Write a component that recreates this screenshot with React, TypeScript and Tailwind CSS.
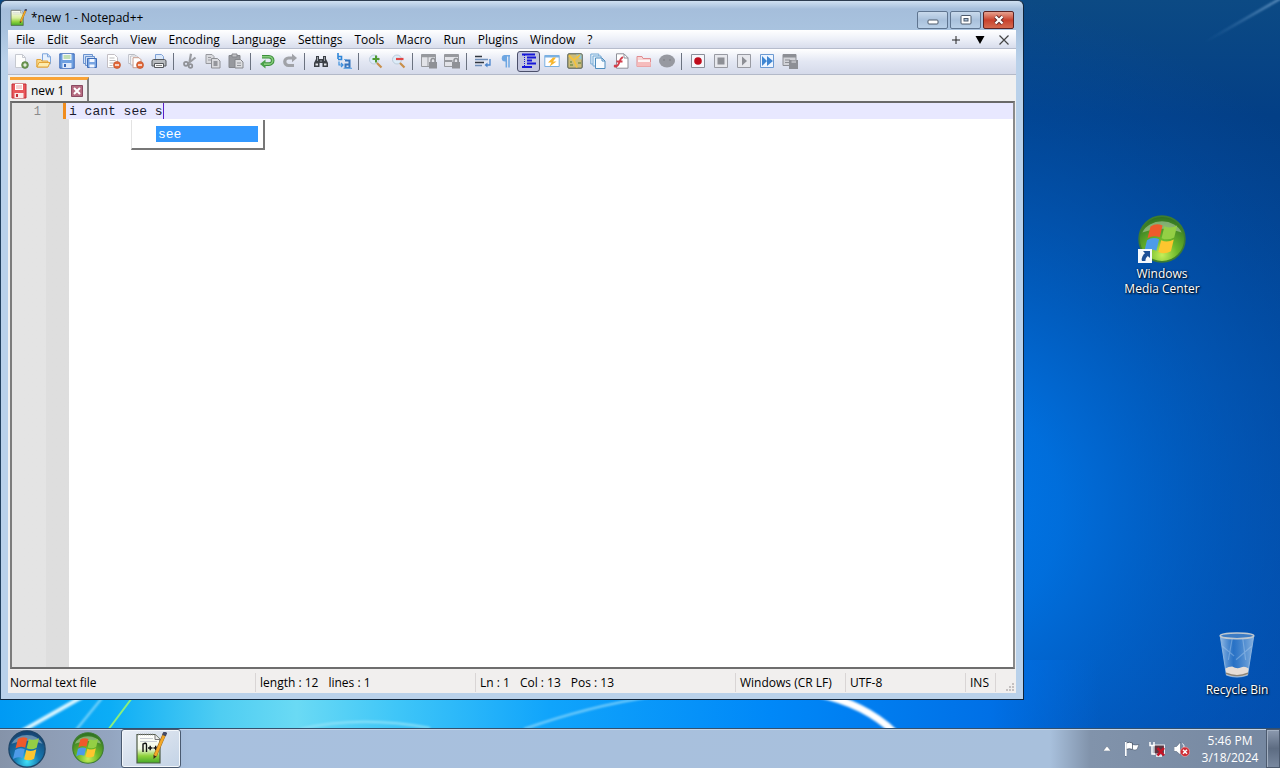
import { useState } from "react";
import type { ReactNode } from "react";

function Icon({ children, size = "size-4" }: { children: ReactNode; size?: string }) {
  return (
    <svg viewBox="0 0 16 16" className={`${size} shrink-0`} fill="none" aria-hidden="true">
      {children}
    </svg>
  );
}

const page = "M2.5 1.5h7l3 3v10h-10z";

const IconNew = (
  <Icon>
    <path d={page} fill="#fdfdfd" stroke="#c6c9d0" />
    <path d="M9.5 1.5v3h3" stroke="#c6c9d0" />
    <circle cx="12" cy="12" r="3.4" fill="#6f9a55" stroke="#4d7538" strokeWidth=".6" />
    <path d="M12 10.2v3.6M10.2 12h3.6" stroke="#fff" strokeWidth="1.2" />
  </Icon>
);
const IconOpen = (
  <Icon>
    <path d="M6.5.8h5l3 3v7h-8z" fill="#e8f1fc" stroke="#7ea6dc" />
    <path d="M11.5.8v3h3" stroke="#7ea6dc" />
    <path d="M.8 14V6.5h4l1 1.5h6V14z" fill="#fbd98a" stroke="#e2a338" />
    <path d="M1 14l2-4.5h11L12 14z" fill="#fdecae" stroke="#e2a338" />
  </Icon>
);
const IconSave = (
  <Icon>
    <path d="M.8.8h14.4v14.4H.8z" fill="#6fa0e0" stroke="#3968b8" />
    <path d="M3.5 1h9v6h-9z" fill="#f4f8ff" />
    <path d="M4.5 3h7M4.5 5h7" stroke="#8fc56f" />
    <path d="M3.5 10h9v5h-9z" fill="#dfeafa" />
    <path d="M5 11h2v3H5z" fill="#3968b8" />
  </Icon>
);
const IconSaveAll = (
  <Icon>
    <path d="M1.5 1.5h9v9h-9z" fill="#cfe0f7" stroke="#6b93cf" />
    <path d="M3.5 3.5h9v9h-9z" fill="#cfe0f7" stroke="#6b93cf" />
    <path d="M5.5 5.5h9v9h-9z" fill="#79a5e2" stroke="#3f6db8" />
    <path d="M7.5 6h5v3h-5zM7.5 11.5h5v3h-5z" fill="#f2f7ff" />
  </Icon>
);
const Minus = (
  <g>
    <circle cx="12" cy="12" r="3.5" fill="#e2683a" stroke="#b94b22" strokeWidth=".6" />
    <path d="M10 12h4" stroke="#fff" strokeWidth="1.4" />
  </g>
);
const IconClose = (
  <Icon>
    <path d={page} fill="#fff" stroke="#c3bfc4" />
    <path d="M4.5 5h5M4.5 7.5h6M4.5 10h5M4.5 12.5h3" stroke="#bbb" />
    {Minus}
  </Icon>
);
const IconCloseAll = (
  <Icon>
    <path d="M.7 1.5h6l2 2v7h-8z" fill="#fff" stroke="#b9bcc4" />
    <path d="M2.7 3h6l2 2v7h-8z" fill="#fff" stroke="#b9bcc4" />
    <path d="M5 4.7h6l2 2v8H5z" fill="#fff" stroke="#c59a8c" />
    {Minus}
  </Icon>
);
const IconPrint = (
  <Icon>
    <path d="M4.5 7V1.5h6l2 2V7" fill="#dce9fa" stroke="#7ea1d6" />
    <path d="M1 7.5l1.5-1h11l1.5 1V13H1z" fill="#b9bcc0" stroke="#55585c" />
    <path d="M3.5 10.5h9v4h-9z" fill="#f8f8f8" stroke="#55585c" />
    <path d="M5 12.5h6" stroke="#888" />
  </Icon>
);
const IconCut = (
  <Icon>
    <path d="M9 .8L7.5 9M13.5 4.5L6 10.5" stroke="#9a9ca1" strokeWidth="2.2" />
    <circle cx="4" cy="10.8" r="2" stroke="#8f9196" strokeWidth="1.7" />
    <circle cx="8.5" cy="13" r="1.8" stroke="#8f9196" strokeWidth="1.7" />
  </Icon>
);
const IconCopy = (
  <Icon>
    <path d="M1 1.5h6l2 2v7H1z" fill="#d9dade" stroke="#97999e" />
    <path d="M3 4.5h3M3 7h3" stroke="#97999e" />
    <path d="M6.5 5.5h6L15 8v7H6.5z" fill="#d9dade" stroke="#8c8e93" />
    <path d="M8.5 8h4v5h-4z" fill="#94969b" />
  </Icon>
);
const IconPaste = (
  <Icon>
    <path d="M1 2.500h11v12H1z" fill="#97999e" stroke="#85878c" />
    <path d="M4 1h5v3H4z" fill="#c4c5c9" stroke="#85878c" />
    <path d="M7 6.500h5.500L15 9v6H7z" fill="#dcdde0" stroke="#85878c" />
    <path d="M9 10h4M9 12.500h4" stroke="#94969b" />
  </Icon>
);
const IconUndo = (
  <Icon>
    <path d="M3 3.700h7a3.700 3.700 0 0 1 0 7.400H5.500" stroke="#3d8f3d" strokeWidth="3.600" />
    <path d="M6.500 6.500v9L1 11z" fill="#49a049" />
    <path d="M3 3.700h7a3.700 3.700 0 0 1 0 7.400H5" stroke="#86cc7c" strokeWidth="1.600" />
  </Icon>
);
const IconRedo = (
  <Icon>
    <path d="M11 5H6.500a3.500 3.500 0 0 0 0 7.500H12" stroke="#a0a2a7" strokeWidth="3.200" />
    <path d="M10 .8v8.500L15 5z" fill="#a0a2a7" />
  </Icon>
);
const IconFind = (
  <Icon>
    <path d="M3 3h3v3h4V3h3v3l2 4v4H9.500v-4h-3v4H1v-4l2-4z" fill="#3b3f45" />
    <path d="M2.500 10.500h2.500v2H2.500zM11 10.500h2.500v2H11z" fill="#e2e4e8" />
    <path d="M4.500 4v4M11.500 4v4M8 7v2" stroke="#9aa0a8" />
  </Icon>
);
const IconReplace = (
  <Icon>
    <path d="M2 0v6M2 3.500h3.500v3H2" stroke="#2f86d8" strokeWidth="1.600" />
    <path d="M3 8.500v3.500h3.500M5 10l2 2-2 2" stroke="#3d8fdd" strokeWidth="1.200" />
    <path d="M9 7.500h4.500V15H9.500v-3.500h4" stroke="#3574bd" strokeWidth="2" />
    <path d="M7.500 15.300H16M8 6.500h3" stroke="#6aa9e4" strokeWidth="1.200" />
  </Icon>
);
const IconZoomIn = (
  <Icon>
    <circle cx="7" cy="6.500" r="4.500" fill="#dcecf8" stroke="#bccbda" />
    <path d="M10 10l4.500 4.500" stroke="#c98f4b" strokeWidth="2.200" />
    <path d="M9 2.500v7M5.500 6h7" stroke="#4f9a31" strokeWidth="2" />
  </Icon>
);
const IconZoomOut = (
  <Icon>
    <circle cx="7" cy="6.500" r="4.500" fill="#dcecf8" stroke="#bccbda" />
    <path d="M10 10l4.500 4.500" stroke="#c98f4b" strokeWidth="2.200" />
    <path d="M6 6h7.500" stroke="#e04646" strokeWidth="2.200" />
  </Icon>
);
const Lock = (
  <g>
    <path d="M8 9h8v6.500H8z" fill="#8f9196" />
    <path d="M10 9V7.500a2 2 0 0 1 4 0V9" stroke="#8f9196" strokeWidth="1.500" />
  </g>
);
const IconSyncV = (
  <Icon>
    <path d="M.5 1.500h14v12H.5z" fill="#e2e3e8" stroke="#97999e" />
    <path d="M.5 3h14" stroke="#97999e" strokeWidth="2.500" />
    <path d="M7 3v10" stroke="#97999e" />
    {Lock}
  </Icon>
);
const IconSyncH = (
  <Icon>
    <path d="M.5 1.500h14v12H.5z" fill="#e2e3e8" stroke="#97999e" />
    <path d="M.5 3h14M.5 8h8" stroke="#97999e" strokeWidth="2.200" />
    {Lock}
  </Icon>
);
const IconWrap = (
  <Icon>
    <path d="M0 3.500h7M0 9.500h9" stroke="#30363f" strokeWidth="1.300" />
    <path d="M0 6.500h13M0 12.500h7" stroke="#6f8fba" strokeWidth="1.300" />
    <path d="M15 6v6h-4" stroke="#4a84cc" strokeWidth="1.300" />
    <path d="M12.500 9.500L9.500 12l3 2.500z" fill="#4a84cc" />
  </Icon>
);
const IconPilcrow = (
  <Icon>
    <path d="M12 2.800H6.500M8.300 3v11.500M11 3v11.500" stroke="#6da6e2" strokeWidth="1.500" />
    <path d="M8 2H7a3 3 0 0 0 0 6.500h1z" fill="#6da6e2" />
  </Icon>
);
const IconIndent = (
  <Icon>
    <path d="M1 1.500h13M6 4.500h9M6 7.500h5M6 10.500h9M1 14h10" stroke="#1616d8" strokeWidth="1.800" />
    <path d="M3.500 2v12" stroke="#1616d8" strokeDasharray="1 1" />
  </Icon>
);
const IconLanguage = (
  <Icon>
    <path d="M.8 2.500h14.400v11H.8z" fill="#fff" stroke="#7ab0e2" />
    <path d="M.8 3.500h14.400" stroke="#7ab0e2" strokeWidth="2" />
    <path d="M9 4.500L4 9.500h3.500L5.500 13.500l7-5H9l3-4z" fill="#f8b62c" />
  </Icon>
);
const IconMap = (
  <Icon>
    <rect x=".8" y=".8" width="14.400" height="14.400" rx="1" fill="#cbbd7e" stroke="#4b554a" />
    <path d="M9 1.500h5.500V7z" fill="#8ec8e4" />
    <path d="M2 2.500l5 5 3 7M7 7l6-5" stroke="#f5c33b" strokeWidth="1.800" />
    <path d="M3 12h3M3 9h2M11 10h3" stroke="#79914a" strokeWidth="1.500" />
  </Icon>
);
const IconDocList = (
  <Icon>
    <path d="M.8 1h8v10h-8z" fill="#e3f0fb" stroke="#75a9d4" />
    <path d="M3 3h8v10H3z" fill="#e3f0fb" stroke="#75a9d4" />
    <path d="M5.500 5h6.500l3 3v7.500H5.500z" fill="#f7fbff" stroke="#4f8dbf" />
    <path d="M12 5v3h3" stroke="#4f8dbf" />
  </Icon>
);
const IconFunction = (
  <Icon>
    <path d="M3.500.8H11l4 4v10.400H3.500z" fill="#fff" stroke="#8f8f98" />
    <path d="M11 1v4h4" stroke="#8f8f98" />
    <path d="M10 4.500C6 4 7.500 13 2.500 13.500M3.500 8.500h6" stroke="#d33f4c" strokeWidth="1.800" />
    <circle cx="2.200" cy="13" r="1.500" fill="#d33f4c" />
  </Icon>
);
const IconFolder = (
  <Icon>
    <path d="M1 13.500V3.500h5l1 2h7.500v8z" fill="#f8d6d6" stroke="#e08c90" />
    <path d="M2 8h12" stroke="#fff" strokeWidth="1.500" />
    <path d="M1 13.500l1-4.500h13l-.5 4.500z" fill="#f6bcbc" />
  </Icon>
);
const IconMonitor = (
  <Icon>
    <ellipse cx="8" cy="8" rx="8" ry="6.500" fill="#9799a0" />
    <circle cx="5" cy="7" r="1" fill="#85878c" />
    <circle cx="11" cy="7" r="1" fill="#85878c" />
  </Icon>
);
const IconRecord = (
  <Icon>
    <path d="M1.500 1.500h13v13h-13z" fill="#f6f7fb" stroke="#8a8f9a" />
    <circle cx="8" cy="8" r="3.800" fill="#c00c1c" />
  </Icon>
);
const IconStop = (
  <Icon>
    <path d="M1.500 1.500h13v13h-13z" fill="#e7e8ed" stroke="#989aa2" />
    <path d="M4.500 4.500h7v7h-7z" fill="#8d8f95" />
  </Icon>
);
const IconPlay = (
  <Icon>
    <path d="M1.500 1.500h13v13h-13z" fill="#e7e8ed" stroke="#989aa2" />
    <path d="M6 3.500v9l5-4.500z" fill="#8d8f95" />
  </Icon>
);
const IconFast = (
  <Icon>
    <path d="M1.500 1.500h13v13h-13z" fill="#eef5ff" stroke="#6c9ad2" />
    <path d="M3 3v10l5-5zM8 3v10l6-5z" fill="#3f86d2" />
  </Icon>
);
const IconSaveMacro = (
  <Icon>
    <path d="M1 1.500h13v11H1z" fill="#d2d3d8" stroke="#8d8f95" />
    <path d="M1 3h13" stroke="#8d8f95" strokeWidth="3" />
    <path d="M3 7h5M3 9.500h4" stroke="#8d8f95" />
    <path d="M7 7h9v9H7z" fill="#8d8f95" />
    <path d="M9.500 7.500h4.500V10H9.500z" fill="#b8b9be" />
  </Icon>
);

type Tool = { label: string; icon: ReactNode; pressed?: boolean };

const toolGroups: Tool[][] = [
  [
    { label: "New", icon: IconNew },
    { label: "Open", icon: IconOpen },
    { label: "Save", icon: IconSave },
    { label: "Save All", icon: IconSaveAll },
    { label: "Close", icon: IconClose },
    { label: "Close All", icon: IconCloseAll },
    { label: "Print", icon: IconPrint },
  ],
  [
    { label: "Cut", icon: IconCut },
    { label: "Copy", icon: IconCopy },
    { label: "Paste", icon: IconPaste },
  ],
  [
    { label: "Undo", icon: IconUndo },
    { label: "Redo", icon: IconRedo },
  ],
  [
    { label: "Find", icon: IconFind },
    { label: "Replace", icon: IconReplace },
  ],
  [
    { label: "Zoom In", icon: IconZoomIn },
    { label: "Zoom Out", icon: IconZoomOut },
  ],
  [
    { label: "Synchronize Vertical Scrolling", icon: IconSyncV },
    { label: "Synchronize Horizontal Scrolling", icon: IconSyncH },
  ],
  [
    { label: "Word Wrap", icon: IconWrap },
    { label: "Show All Characters", icon: IconPilcrow },
    { label: "Show Indent Guide", icon: IconIndent, pressed: true },
    { label: "Define Language", icon: IconLanguage },
    { label: "Document Map", icon: IconMap },
    { label: "Document List", icon: IconDocList },
    { label: "Function List", icon: IconFunction },
    { label: "Folder as Workspace", icon: IconFolder },
    { label: "Monitoring", icon: IconMonitor },
  ],
  [
    { label: "Start Recording", icon: IconRecord },
    { label: "Stop Recording", icon: IconStop },
    { label: "Playback", icon: IconPlay },
    { label: "Run a Macro Multiple Times", icon: IconFast },
    { label: "Save Recorded Macro", icon: IconSaveMacro },
  ],
];

const menus = [
  "File",
  "Edit",
  "Search",
  "View",
  "Encoding",
  "Language",
  "Settings",
  "Tools",
  "Macro",
  "Run",
  "Plugins",
  "Window",
  "?",
];

function Wallpaper() {
  return (
    <svg
      className="absolute inset-0 size-full"
      viewBox="0 0 1280 768"
      preserveAspectRatio="none"
      aria-hidden="true"
    >
      <defs>
        <linearGradient id="base" x1="0" y1="0" x2="0" y2="1">
          <stop offset="0" stopColor="#0c4a84" />
          <stop offset=".15" stopColor="#033f86" />
          <stop offset=".5" stopColor="#03479a" />
          <stop offset="1" stopColor="#044cac" />
        </linearGradient>
        <radialGradient id="glow" gradientUnits="userSpaceOnUse" cx="930" cy="510" r="520">
          <stop offset="0" stopColor="#007bf0" />
          <stop offset=".25" stopColor="#0072e2" stopOpacity=".9" />
          <stop offset="1" stopColor="#0050b0" stopOpacity="0" />
        </radialGradient>
        <linearGradient id="horizon" gradientUnits="userSpaceOnUse" x1="0" y1="0" x2="1100" y2="0">
          <stop offset="0" stopColor="#009af4" />
          <stop offset=".1" stopColor="#0cadf6" />
          <stop offset=".2" stopColor="#4fcdf2" />
          <stop offset=".27" stopColor="#6adaf4" />
          <stop offset=".36" stopColor="#3fc6f8" />
          <stop offset=".5" stopColor="#10a4fb" />
          <stop offset=".7" stopColor="#0088f8" />
          <stop offset=".9" stopColor="#0070e6" />
          <stop offset="1" stopColor="#0068dc" stopOpacity="0" />
        </linearGradient>
        <linearGradient id="ray" gradientUnits="userSpaceOnUse" x1="1205" y1="42" x2="1280" y2="0">
          <stop offset="0" stopColor="#4d86bb" stopOpacity="0" />
          <stop offset="1" stopColor="#6c9cc8" />
        </linearGradient>
        <filter id="soft">
          <feGaussianBlur stdDeviation="1" />
        </filter>
      </defs>
      <rect width="1280" height="768" fill="url(#base)" />
      <rect width="1280" height="768" fill="url(#glow)" />
      <rect y="660" width="1100" height="108" fill="url(#horizon)" />
      <g filter="url(#soft)" fill="none">
        <path d="M22 731L82 697" stroke="#d8f5ff" strokeWidth="4" />
        <path d="M76 730L102 698" stroke="#7fd6fb" strokeWidth="2" />
        <path d="M300 729Q360 715 430 728" stroke="#8fe2f8" strokeWidth="2" />
        <path d="M524 729Q590 706 650 697" stroke="#7fd2fb" strokeWidth="2" />
        <path d="M818 694Q865 704 894 732" stroke="#fff" strokeWidth="7" />
        <path d="M1205 42L1285 -4" stroke="url(#ray)" strokeWidth="2" />
      </g>
      <path d="M108 730L132 698" stroke="#8bf07a" strokeWidth="2" />
    </svg>
  );
}

function Flag() {
  return (
    <g transform="translate(22 22) scale(1.3) translate(-22.6 -21.4)">
      <path d="M14.500 12.500q4-2.600 8.500-.6l-2 8.300q-4.300-1.900-8.600.6z" fill="#ee5a2c" />
      <path d="M24.300 12.400q4.200 2 9-.6l-2.100 8.500q-4.400 2.400-8.900.5z" fill="#94cf45" />
      <path d="M12 22.200q4.200-2.500 8.600-.6l-2 8q-4.200-1.800-8.500.7z" fill="#4d9be8" />
      <path d="M22 22.200q4.400 2 8.900-.5l-2 8.300q-4.500 2.500-8.900.5z" fill="#fdc62f" />
    </g>
  );
}

function Orb({ tone, size }: { tone: "blue" | "green"; size: string }) {
  const blue = tone === "blue";
  const id = `orb-${tone}-${size}`;
  return (
    <svg viewBox="0 0 44 44" className={`${size} shrink-0`} aria-hidden="true">
      <defs>
        <radialGradient id={id} cx=".5" cy=".85" r=".85">
          <stop offset="0" stopColor={blue ? "#3fe0f8" : "#c5ee5a"} />
          <stop offset=".4" stopColor={blue ? "#1678b0" : "#6cb82a"} />
          <stop offset="1" stopColor={blue ? "#16406e" : "#2c6e22"} />
        </radialGradient>
      </defs>
      <circle cx="22" cy="22" r="21" fill={`url(#${id})`} stroke={blue ? "#1d4568" : "#3d7d30"} strokeWidth="1.500" />
      <path d="M4 16a19 15 0 0 1 36 0q-18-7-36 0z" fill="#fff" opacity=".35" />
      <Flag />
    </svg>
  );
}

function NotepadIcon({ size, letters }: { size: string; letters?: boolean }) {
  return (
    <svg viewBox="0 0 32 32" className={`${size} shrink-0`} aria-hidden="true">
      <defs>
        <linearGradient id={`np-${size}`} x1="0" y1="0" x2="0" y2="1">
          <stop offset="0" stopColor="#fff" />
          <stop offset=".5" stopColor={letters ? "#f1f8e4" : "#d9ee9e"} />
          <stop offset=".75" stopColor="#90d23c" />
          <stop offset="1" stopColor="#44a82a" />
        </linearGradient>
      </defs>
      <path d="M2 2.500h18l5 5V31H2z" fill={`url(#np-${size})`} stroke="#4e5a46" strokeWidth="1.200" />
      <path d="M20 2.500v5h5" fill="#eee" stroke="#777" />
      <path d="M3 2.500h16" stroke="#777" strokeWidth="1.500" strokeDasharray="1 1" />
      <path d="M5 6.500h13M5 9.500h17" stroke="#c9ccd2" />
      {letters && (
        <g fill="none" stroke="#111" strokeWidth="1.400">
          <path d="M8 20v-8q3.500-2 3.500 1v7" />
          <path d="M13 16h4.500M15.200 13.800v4.400M18.500 16H23M20.700 13.800v4.400" />
        </g>
      )}
      <path d="M29.500 2L20 24" stroke="#9a6a24" strokeWidth="3.600" />
      <path d="M29 3.500L20 24" stroke="#f3a827" strokeWidth="2.600" />
      <path d="M30.500 0L29 3.500" stroke="#454b66" strokeWidth="4" />
      <path d="M18.500 27l0-4 3 1.500z" fill="#3b2a1a" />
    </svg>
  );
}

function TitleBar() {
  const control =
    "flex h-[18px] w-[31px] items-center justify-center rounded-[2px] border border-[#5f7590] bg-gradient-to-b from-[#c9daec] via-[#a9c1dc] to-[#b9d0e8]";
  return (
    <header className="flex h-[29px] shrink-0 items-center px-[2px] pt-1">
      <NotepadIcon size="size-[17px]" />
      <h1 className="flex-1 pl-1 text-[12px] leading-4">*new 1 - Notepad++</h1>
      <div className="flex gap-[2px] pt-1">
        <button type="button" aria-label="Minimize" className={control}>
          <svg viewBox="0 0 12 10" className="h-[10px] w-3">
            <rect x="1" y="5" width="10" height="4" rx="1" fill="#fff" stroke="#4d5a6b" />
          </svg>
        </button>
        <button type="button" aria-label="Maximize" className={control}>
          <svg viewBox="0 0 12 10" className="h-[10px] w-3" fill="none">
            <rect x="1" y=".5" width="10" height="8.500" rx="1" fill="#fff" stroke="#4d5a6b" />
            <rect x="4" y="3.500" width="4" height="2.500" fill="#a9c1dc" stroke="#4d5a6b" />
          </svg>
        </button>
        <button
          type="button"
          aria-label="Close"
          className="flex h-[18px] w-[31px] items-center justify-center rounded-[2px] border border-[#5c2323] bg-gradient-to-b from-[#e6a291] via-[#c8402c] to-[#d56a50]"
        >
          <svg viewBox="0 0 12 10" className="h-[10px] w-3">
            <path d="M2.500 1.500l7 7M9.500 1.500l-7 7" stroke="#5d2a2a" strokeWidth="4" />
            <path d="M2.500 1.500l7 7M9.500 1.500l-7 7" stroke="#fff" strokeWidth="2.400" />
          </svg>
        </button>
      </div>
    </header>
  );
}

function MenuBar() {
  return (
    <nav className="flex h-[19px] shrink-0 items-center justify-between border-b border-[#b6bccc] bg-gradient-to-b from-white via-[#edf0f8] to-[#d8ddec] pt-[2px] pl-[2px]">
      <div className="flex">
        {menus.map((menu) => (
          <button key={menu} type="button" className="px-[6px] leading-4">
            {menu}
          </button>
        ))}
      </div>
      <div className="flex">
        <button type="button" aria-label="New tab" className="flex w-6 justify-center">
          <svg viewBox="0 0 10 10" className="size-[10px]">
            <path d="M5 1v8M1 5h8" stroke="#222" />
          </svg>
        </button>
        <button type="button" aria-label="Tab list" className="flex w-6 justify-center">
          <svg viewBox="0 0 10 10" className="size-[10px]">
            <path d="M.5 1h9L5 9z" fill="#000" />
          </svg>
        </button>
        <button type="button" aria-label="Close tab" className="flex w-6 justify-center">
          <svg viewBox="0 0 10 10" className="size-[10px]">
            <path d="M.5.5l9 9M9.500.5l-9 9" stroke="#444" strokeWidth="1.200" />
          </svg>
        </button>
      </div>
    </nav>
  );
}

function ToolBar() {
  return (
    <div
      role="toolbar"
      className="flex h-[26px] shrink-0 items-center border-b border-[#b3b9c8] bg-gradient-to-b from-white via-[#e3e7f3] to-[#d5daea] pb-px pl-px"
    >
      {toolGroups.map((group, index) => (
        <div key={index} className="flex items-center">
          {index > 0 && <div className="mr-1 ml-[3px] h-[17px] w-px bg-[#6b7280]" />}
          {group.map((tool) => (
            <button
              key={tool.label}
              type="button"
              aria-label={tool.label}
              aria-pressed={tool.pressed}
              className={
                tool.pressed
                  ? "flex h-[21px] w-[23px] items-center justify-center rounded-[3px] border border-[#4b4f6a] bg-[#c3c6de]"
                  : "flex h-[21px] w-[23px] items-center justify-center"
              }
            >
              {tool.icon}
            </button>
          ))}
        </div>
      ))}
    </div>
  );
}

function Editor() {
  const [text, setText] = useState("i cant see s");
  return (
    <main className="relative flex min-h-0 flex-1 border-2 border-t-[#696969] border-r-[#8a8a8a] border-b-[#6e6e6e] border-l-[#7c7c7c] bg-white font-['Liberation_Mono','DejaVu_Sans_Mono',monospace] text-[13px] leading-4">
      <div className="flex w-[57px] shrink-0 bg-gradient-to-r from-[#e4e4e4] from-60% to-[#dedede] to-60%">
        <span className="w-[29px] pt-px text-right text-[12px] text-[#8a8a8a]">1</span>
        <span className="mr-[3px] ml-auto h-4 w-[3px] bg-[#f08c1e]" />
        <span className="-ml-[3px] h-4 w-[3px] bg-[#e8e8ff]" />
      </div>
      <div className="relative min-w-0 flex-1">
        <textarea
          aria-label="Document text"
          spellCheck={false}
          value={text}
          onChange={(event) => setText(event.target.value)}
          className="block size-full resize-none bg-[linear-gradient(#e8e8ff_16px,#ffffff_16px)] pt-px text-[#1b1b2e] outline-none"
        />
        <span className="absolute top-0 left-[12ch] h-4 w-px bg-[#5a20c8]" />
        <ul
          role="listbox"
          aria-label="Completions"
          className="absolute top-[17px] left-[62px] w-[134px] border-r-2 border-b-2 border-l border-r-[#777] border-b-[#777] border-l-[#e3e3e3] bg-white py-[6px] pr-[5px] pl-6"
        >
          <li role="option" aria-selected="true" className="bg-[#3399ff] pt-px pl-[2px] leading-[15px] text-white">
            see
          </li>
        </ul>
      </div>
    </main>
  );
}

function StatusBar() {
  const cell = "flex items-center gap-[10px] border-l border-[#d9d5d5] pl-1";
  return (
    <footer className="flex h-6 shrink-0 bg-[#f1efee] pt-1 pb-px leading-4">
      <div className="flex flex-1 items-center pl-[2px]">Normal text file</div>
      <div className={`${cell} w-[220px]`}>
        <span>length : 12</span>
        <span>lines : 1</span>
      </div>
      <div className={`${cell} w-[260px]`}>
        <span>Ln : 1</span>
        <span>Col : 13</span>
        <span>Pos : 13</span>
      </div>
      <div className={`${cell} w-[110px]`}>Windows (CR LF)</div>
      <div className={`${cell} w-[120px]`}>UTF-8</div>
      <div className={`${cell} w-[30px]`}>INS</div>
      <div className="flex w-[21px] items-end justify-end border-l border-[#d9d5d5] pr-px">
        <svg viewBox="0 0 9 9" className="size-[9px]" fill="#c4c0c0">
          <path d="M6 0h2v2H6zM3 3h2v2H3zM6 3h2v2H6zM0 6h2v2H0zM3 6h2v2H3zM6 6h2v2H6z" />
        </svg>
      </div>
    </footer>
  );
}

function NotepadWindow() {
  return (
    <section className="absolute top-0 bottom-[28px] left-0 flex w-4/5 flex-col rounded-t-md border border-t-[#2c3c50] border-r-[#10243a] border-b-[#10243a] border-l-[#22405e] bg-[linear-gradient(to_bottom,#cfe0f1_0,#a5bedb_8px,#a9c3df_30px,#b9d1ea_60px)] px-[7px] pb-[6px] text-[12px] text-black">
      <TitleBar />
      <MenuBar />
      <ToolBar />
      <div className="flex min-h-0 flex-1 flex-col bg-[#f0f0f0] pr-px pl-[2px]">
        <div role="tablist" className="flex h-[26px] shrink-0 items-end">
          <div className="flex h-6 items-center border-t-[3px] border-r-2 border-t-[#f9a336] border-r-[#808080] pr-1 pl-px">
            <svg viewBox="0 0 16 16" className="size-4">
              <path d="M1 1h14v14H1z" fill="#e8575b" stroke="#c22f38" />
              <path d="M4 1h8v6H4z" fill="#fff" />
              <path d="M5 3h6M5 5h6" stroke="#e8a0a0" />
              <path d="M3.500 10h9v5h-9z" fill="#fbeaea" />
              <path d="M5 11h2v3H5z" fill="#c22f38" />
            </svg>
            <button type="button" role="tab" aria-selected="true" className="pr-[7px] pl-1 leading-4">
              new 1
            </button>
            <button type="button" aria-label="Close new 1">
              <svg viewBox="0 0 12 12" className="size-3">
                <path d="M.5.5h11v11H.5z" fill="#b56b80" stroke="#8a4a62" />
                <path d="M3 3l6 6M9 3L3 9" stroke="#fff" strokeWidth="2" />
              </svg>
            </button>
          </div>
        </div>
        <Editor />
      </div>
      <StatusBar />
    </section>
  );
}

function DesktopIcons() {
  const label = "text-center text-[12px] leading-[15px] text-white [text-shadow:1px_1px_2px_#000,0_0_2px_#001a40]";
  return (
    <>
      <button type="button" className="absolute top-[215px] left-[1122px] flex w-20 flex-col items-center">
        <span className="relative mb-[3px]">
          <Orb tone="green" size="size-12" />
          <svg viewBox="0 0 14 14" className="absolute bottom-0 left-0 size-[14px]">
            <path d="M0 0h14v14H0z" fill="#f4f8fc" />
            <path d="M5 2h7v7L9.800 7Q7 9 7.500 12H4Q2.500 8 7 4.300z" fill="#1c4f96" />
          </svg>
        </span>
        <span className={label}>
          Windows
          <br />
          Media Center
        </span>
      </button>
      <button type="button" className="absolute top-[631px] left-[1197px] flex w-20 flex-col items-center">
        <svg viewBox="0 0 40 50" className="mb-[3px] h-12 w-10">
          <defs>
            <linearGradient id="bin" x1="0" y1="0" x2="1" y2="0">
              <stop offset="0" stopColor="#b8d3ee" stopOpacity=".8" />
              <stop offset=".4" stopColor="#4d8fd6" stopOpacity=".5" />
              <stop offset="1" stopColor="#a6c8ea" stopOpacity=".8" />
            </linearGradient>
          </defs>
          <path d="M2.500 5L9 46q11 4 22 0L37.500 5z" fill="url(#bin)" stroke="#8eb6e0" />
          <path d="M8 39L9 45.500q11 4 22 0L32 39q-4-3-8-1t-9-1q-4 0-7 2z" fill="#e6ddd6" />
          <path d="M5 16l12 10M35 16L19 30M15 8l-4 22M26 8l3 22" stroke="#c2dcf4" strokeWidth="1.200" opacity=".35" />
          <ellipse cx="20" cy="5" rx="17.500" ry="3" fill="#3d7cc4" stroke="#bfc8d0" strokeWidth="1.600" />
          <path d="M8.500 44q11.500 5 23 0" stroke="#8a8378" strokeWidth="1.500" fill="none" />
        </svg>
        <span className={label}>Recycle Bin</span>
      </button>
    </>
  );
}

function TaskBar() {
  return (
    <footer className="relative flex h-10 shrink-0 items-stretch border-t border-[#33506e] bg-[linear-gradient(to_right,#8593a9_0,#8e9db5_50px,#93a5c0_110px,#a8c0de_190px,#a8c0dc_calc(100%-230px),#8193ab_calc(100%-190px),#7587a0_100%)] shadow-[inset_0_1px_0_#c3d5e8]">
      <button type="button" aria-label="Start" className="flex w-[54px] items-center justify-center">
        <Orb tone="blue" size="size-[38px]" />
      </button>
      <button type="button" aria-label="Windows Media Center" className="flex w-[67px] items-center justify-center pb-[2px]">
        <Orb tone="green" size="size-8" />
      </button>
      <button
        type="button"
        aria-label="*new 1 - Notepad++"
        className="flex w-[60px] items-center justify-center rounded-[3px] border border-[#4a5a70] bg-gradient-to-br from-[#e9eef5] via-[#d5dfec] to-[#c3d3e6] pb-[2px] shadow-[inset_0_0_0_1px_#f3f7fb]"
      >
        <NotepadIcon size="size-8" letters />
      </button>
      <div className="ml-auto flex items-center text-white">
        <button type="button" aria-label="Show hidden icons" className="flex w-6 justify-center">
          <svg viewBox="0 0 8 5" className="h-[5px] w-2">
            <path d="M4 0l4 5H0z" fill="#fff" stroke="#56657a" strokeWidth=".5" />
          </svg>
        </button>
        <button type="button" aria-label="Action Center" className="flex w-[25px] justify-center">
          <svg viewBox="0 0 16 16" className="size-4">
            <path d="M1.500.5v15M2 2q3.500-1.500 6.500 0v6.500Q5.500 7 2 8.500z" fill="#fff" stroke="#3e4b5d" strokeWidth=".8" />
            <path d="M1.800 1v14" stroke="#fff" strokeWidth="1.600" />
            <path d="M8.500 3.500q3 1 6.500 0l-2 5q-2 1-4.500 0z" fill="#fff" stroke="#3e4b5d" strokeWidth=".5" />
          </svg>
        </button>
        <button type="button" aria-label="Network" className="flex w-[25px] justify-center">
          <svg viewBox="0 0 16 16" className="size-4">
            <path d="M5 4h10.500v9H5z" fill="#5c3540" stroke="#e8edf2" strokeWidth="1.200" />
            <path d="M1 1v3.500h4V1M3 4.500V13h3M7 15h6" fill="none" stroke="#fff" strokeWidth="1.500" />
            <path d="M8.500 7l6.500 7.500M15 7l-6.500 7.500" stroke="#c31426" strokeWidth="2.600" />
          </svg>
        </button>
        <button type="button" aria-label="Volume muted" className="flex w-[25px] justify-center">
          <svg viewBox="0 0 16 16" className="size-4">
            <path d="M0 5.500h2.500L6.500 1v13L2.500 10.500H0z" fill="#fff" stroke="#56657a" strokeWidth=".6" />
            <path d="M8.500 2.500q2 2 1.500 4" stroke="#fff" fill="none" />
            <circle cx="11" cy="10.800" r="4.700" fill="#cf2c34" stroke="#f0b2b2" strokeWidth=".6" />
            <path d="M9 8.800l4 4M13 8.800l-4 4" stroke="#fff" strokeWidth="1.500" />
          </svg>
        </button>
        <button type="button" className="flex w-[72px] flex-col items-center text-[12px] leading-[17px]">
          <span>5:46 PM</span>
          <span>3/18/2024</span>
        </button>
        <button
          type="button"
          aria-label="Show desktop"
          className="w-[14px] self-stretch border border-[#4c5a6e] bg-gradient-to-b from-[#8c9aaf] via-[#5d6c82] to-[#78889f] shadow-[inset_1px_1px_0_#a3b0c2]"
        />
      </div>
    </footer>
  );
}

export default function App() {
  return (
    <div className="relative flex h-screen flex-col overflow-hidden bg-[#0450b4] font-['Open_Sans','Noto_Sans',sans-serif]">
      <Wallpaper />
      <div className="relative min-h-0 flex-1">
        <DesktopIcons />
        <NotepadWindow />
      </div>
      <TaskBar />
    </div>
  );
}
